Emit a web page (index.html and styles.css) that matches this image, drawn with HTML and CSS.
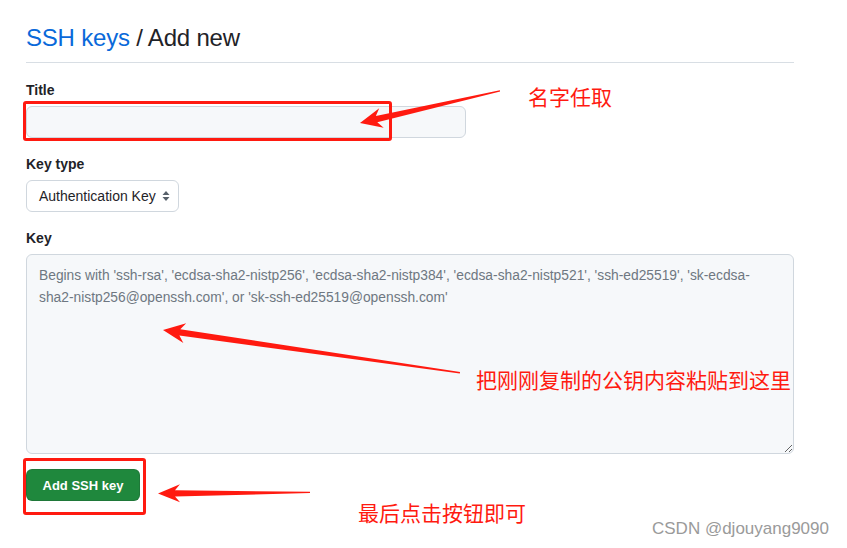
FILE: index.html
```html
<!DOCTYPE html>
<html lang="en">
<head>
<meta charset="utf-8">
<title>SSH keys / Add new</title>
<link rel="stylesheet" href="styles.css">
</head>
<body>
<main class="page">
  <h2 class="subhead"><a class="crumb" href="#">SSH keys</a> / Add new</h2>
  <form class="form">
    <div class="group">
      <label class="label" for="title">Title</label>
      <input class="input" id="title" type="text">
    </div>
    <div class="group">
      <span class="label">Key type</span>
      <div class="select">
        <span>Authentication Key</span>
        <svg class="chev" width="8" height="12" viewBox="0 0 8 12"><path d="M4 1 L7.5 5 H0.5 Z M4 11 L7.5 7 H0.5 Z" fill="#57606a"/></svg>
      </div>
    </div>
    <div class="group">
      <label class="label" for="key">Key</label>
      <textarea class="textarea" id="key" placeholder="Begins with 'ssh-rsa', 'ecdsa-sha2-nistp256', 'ecdsa-sha2-nistp384', 'ecdsa-sha2-nistp521', 'ssh-ed25519', 'sk-ecdsa-&#10;sha2-nistp256@openssh.com', or 'sk-ssh-ed25519@openssh.com'"></textarea>
    </div>
    <button class="btn" type="button">Add SSH key</button>
  </form>
</main>

<div class="mark box-title"></div>
<div class="mark box-btn"></div>
<svg class="arrows" width="847" height="548" viewBox="0 0 847 548">
  <g fill="#ff1a10">
    <polygon transform="translate(360 123) rotate(-12.9)" points="0,0 22,-10 17,-3.2 143.6,-0.6 143.6,0.6 17,3.2 22,10"/>
    <polygon transform="translate(163 330) rotate(8.2)" points="0,0 22,-10 17,-3.2 300,-0.7 300,0.7 17,3.2 22,10"/>
    <polygon transform="translate(158 493.5) rotate(-0.4)" points="0,0 22,-9 17,-3.2 152,-0.6 152,0.6 17,3.2 22,9"/>
  </g>
</svg>
<div class="note note-1">名字任取</div>
<div class="note note-2">把刚刚复制的公钥内容粘贴到这里</div>
<div class="note note-3">最后点击按钮即可</div>
<div class="watermark">CSDN @djouyang9090</div>
</body>
</html>
```
FILE: styles.css
```css
* { box-sizing: border-box; }
html, body { margin: 0; padding: 0; background: #fff; }
body {
  width: 847px;
  height: 548px;
  overflow: hidden;
  position: relative;
  font-family: "Liberation Sans", Arial, sans-serif;
  color: #1f2328;
}
.page {
  width: 768px;
  margin-left: 26px;
}
.subhead {
  margin: 0;
  padding: 23px 0 9px;
  font-size: 24px;
  line-height: 30px;
  font-weight: 400;
  letter-spacing: -0.2px;
  border-bottom: 1px solid #d8dee4;
}
.crumb { color: #0969da; text-decoration: none; }
.form {
  display: flex;
  flex-direction: column;
  align-items: flex-start;
  padding-top: 17px;
}
.group {
  display: flex;
  flex-direction: column;
  align-items: flex-start;
  gap: 6px;
  margin-bottom: 16px;
  width: 100%;
}
.label {
  font-size: 14px;
  line-height: 20px;
  font-weight: 700;
  color: #1f2328;
}
.input {
  width: 440px;
  height: 32px;
  background: #f6f8fa;
  border: 1px solid #d0d7de;
  border-radius: 6px;
  margin: 0;
}
.select {
  width: 153px;
  height: 32px;
  display: flex;
  align-items: center;
  justify-content: space-between;
  padding: 0 8px 0 12px;
  border: 1px solid #d0d7de;
  border-radius: 6px;
  background: #fff;
  font-size: 14px;
  color: #1f2328;
}
.chev { display: block; }
.textarea {
  width: 768px;
  height: 200px;
  margin: 0;
  padding: 10px 12px;
  background: #f6f8fa;
  border: 1px solid #d0d7de;
  border-radius: 6px;
  font-family: "Liberation Sans", Arial, sans-serif;
  font-size: 13.8px;
  line-height: 22px;
  color: #1f2328;
}
.textarea::placeholder { color: #6e7781; opacity: 1; }
.btn {
  margin-top: -1px;
  width: 114px;
  height: 32px;
  background: #1f883d;
  color: #fff;
  border: 1px solid rgba(31, 35, 40, 0.15);
  border-radius: 6px;
  font-family: "Liberation Sans", Arial, sans-serif;
  font-size: 13px;
  font-weight: 700;
  padding: 0;
}
.mark {
  position: absolute;
  border: 3px solid #ff1a10;
  border-radius: 3px;
}
.box-title { left: 23px; top: 101px; width: 369px; height: 40px; }
.box-btn { left: 23px; top: 458px; width: 123px; height: 57px; }
.arrows { position: absolute; left: 0; top: 0; }
.note {
  position: absolute;
  font-family: "Noto Sans CJK SC", sans-serif;
  font-size: 21px;
  line-height: 21px;
  color: #ff1a10;
  white-space: nowrap;
}
.note-1 { left: 528px; top: 86px; }
.note-2 { left: 476px; top: 369px; }
.note-3 { left: 358px; top: 502px; }
.watermark {
  position: absolute;
  left: 652px;
  top: 519px;
  font-size: 17px;
  line-height: 20px;
  color: #9a9a9a;
  white-space: nowrap;
}
```
